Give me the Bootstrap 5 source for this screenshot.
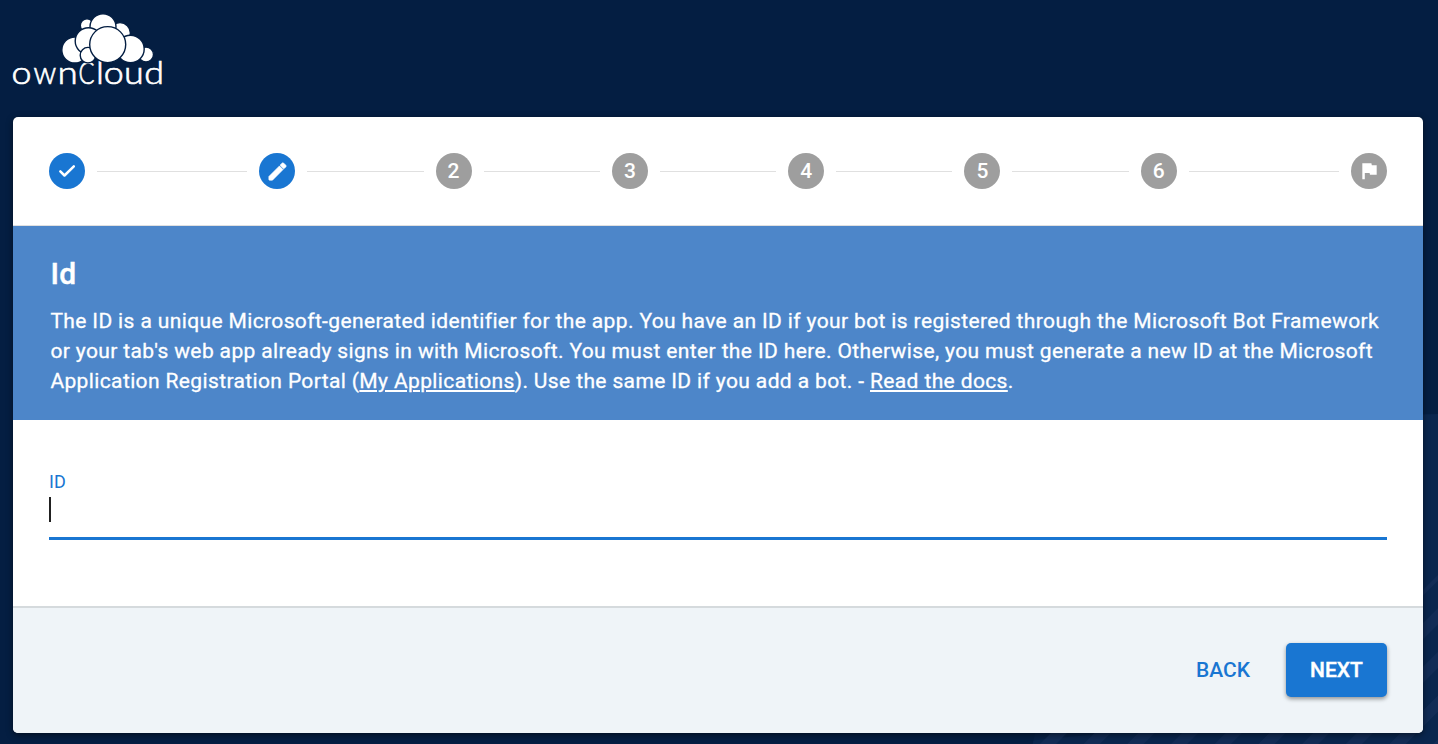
<!DOCTYPE html>
<html lang="en">
<head>
<meta charset="utf-8">
<meta name="viewport" content="width=device-width, initial-scale=1">
<title>ownCloud – Id</title>
<link href="https://cdn.jsdelivr.net/npm/bootstrap@5.3.0/dist/css/bootstrap.min.css" rel="stylesheet">
<style>
body{font-family:Roboto,"Liberation Sans",sans-serif;background:#041e42;height:744px;overflow:hidden;position:relative}
.backdrop{position:absolute;right:0;bottom:0;z-index:-1}
.brand-logo{height:117px;padding-left:5px}
.brand-logo text{font-family:Lato,sans-serif;font-weight:300;font-size:32px}
.wizard{margin:0 15px 0 13px;height:616px;border:0;border-radius:5px;overflow:hidden;box-shadow:0 2px 6px rgba(0,0,0,.5)}
.steps{height:109px;padding:0 36px;border-bottom:1px solid #e0e0e0}
.step-dot{width:36px;height:36px;flex:none;background:#9e9e9e;color:#fff;font-size:21px;font-weight:500;line-height:36px}
.step-dot.active{background:#1976d2}
.step-line{height:1px;background:#e0e0e0;margin:1px 12px 0;flex:1 1 0}
.step-line.wide{flex:0 0 150.3px}
.intro{height:194px;background:#4d86c9;padding:30px 37px 0 37.4px;color:#fff;font-weight:400;font-size:21px;line-height:30px;letter-spacing:.37px}
.intro h1{font-size:30px;line-height:36px;font-weight:500;margin:0 0 14px;letter-spacing:.3px;-webkit-text-stroke:.4px #fff}
.intro p{white-space:nowrap;-webkit-text-stroke:.3px #fff}
.intro a{color:#fff}
.fields{height:186px;padding:51px 36px 0}
.fields label{font-size:18px;line-height:22px;color:#1976d2;display:block}
.id-field{height:47px;border-bottom:3px solid #1976d2;padding-top:4px}
.caret{width:2px;height:25px;background:#212121}
.actions{background:#eff4f8;border-top:2px solid #d5dadd;padding:0 36px 2px}
.actions .btn{font-size:21px;font-weight:500;line-height:24px;height:54px;border:0;padding:0 24px}
.actions .btn-back{color:#1976d2;margin-right:12px}
.actions .btn-next{background:#1976d2;color:#fff;width:101px;border-radius:5px;box-shadow:0 2px 4px rgba(0,0,0,.4);-webkit-text-stroke:.4px #fff}
</style>
</head>
<body>
<svg class="backdrop" width="438" height="344" viewBox="1000 400 438 344" aria-hidden="true">
<defs><pattern id="bars" width="43.7" height="44" patternUnits="userSpaceOnUse" patternTransform="translate(1040 744) skewX(-45)"><path d="M0 0h16v44H0z" fill="#122c56"/></pattern></defs>
<circle cx="1438" cy="828" r="414" fill="#0a264e"/>
<path d="M1220 730H1150Q1080 735 1000 744H1000V690H1200z" fill="#041e42" opacity=".6"/>
<path d="M1038 744V730H1423V590L1438 575V744z" fill="url(#bars)"/>
</svg>
<header class="brand-logo">
<svg width="170" height="110" viewBox="5 0 170 110" fill="#fff" role="img" aria-label="ownCloud">
<g stroke="#fff" stroke-width=".7">
<text transform="translate(11.5 83.6) scale(1.12 1)">o</text>
<text transform="translate(33.5 83.6) scale(.93 1)">w</text>
<text transform="translate(57.5 83.6) scale(1.15 1)">n</text>
<text transform="translate(78.5 83.6) scale(.74 1)">C</text>
<text transform="translate(0 83.6) scale(1.12 1)" x="85.8 92.6 110.7 128.7">loud</text>
</g>
<g stroke="#041e42" stroke-width="1.4">
<circle cx="87" cy="25.5" r="6.7"/><circle cx="120" cy="33" r="10.4"/><circle cx="103" cy="26.7" r="13"/>
<circle cx="74.8" cy="50" r="13"/><circle cx="88.5" cy="41" r="13.3"/><circle cx="146" cy="54.5" r="7.5"/><circle cx="130.5" cy="49" r="13.7"/>
<circle cx="88" cy="55.2" r="7.8"/><circle cx="107.7" cy="44.6" r="18"/></g>
</svg>
</header>
<main class="card wizard">
<nav class="steps d-flex align-items-center">
<span class="step-dot active rounded-circle d-flex align-items-center justify-content-center"><svg width="20" height="20" viewBox="0 0 24 24" fill="none"><path d="M4 12.4 9 17.4 20.2 6.4" stroke="#fff" stroke-width="3" stroke-linecap="round" stroke-linejoin="round"/></svg></span>
<span class="step-line wide"></span>
<span class="step-dot active rounded-circle d-flex align-items-center justify-content-center"><svg width="23" height="23" viewBox="0 0 24 24" fill="#fff"><path d="M3 17.25V20.3q0 .7.7.7H6.750L17.81 9.94l-3.75-3.75zM20.71 7.3a1.5 1.5 0 0 0 0-1.8l-2.2-2.2a1.5 1.5 0 0 0-1.8 0l-1.98 2.05 3.75 3.75z" stroke="#fff" stroke-width=".7"/></svg></span>
<span class="step-line"></span><span class="step-dot rounded-circle text-center">2</span>
<span class="step-line"></span><span class="step-dot rounded-circle text-center">3</span>
<span class="step-line"></span><span class="step-dot rounded-circle text-center">4</span>
<span class="step-line"></span><span class="step-dot rounded-circle text-center">5</span>
<span class="step-line"></span><span class="step-dot rounded-circle text-center">6</span>
<span class="step-line wide"></span>
<span class="step-dot rounded-circle d-flex align-items-center justify-content-center"><svg width="23" height="23" viewBox="0 0 24 24" fill="#fff"><path d="M14.4 5.500 14 3.500H4.500V20h2.600V13.500h5l.4 2h7V5.500z"/></svg></span>
</nav>
<section class="intro">
<h1>Id</h1>
<p class="m-0">The ID is a unique Microsoft-generated identifier for the app. You have an ID if your bot is registered through the Microsoft Bot Framework<br>or your tab's web app already signs in with Microsoft. You must enter the ID here. Otherwise, you must generate a new ID at the Microsoft<br>Application Registration Portal (<a href="#">My Applications</a>). Use the same ID if you add a bot. - <a href="#">Read the docs</a>.</p>
</section>
<section class="fields"><label>ID</label><div class="id-field"><div class="caret"></div></div></section>
<footer class="actions flex-grow-1 d-flex align-items-center justify-content-end">
<button class="btn btn-back" type="button">BACK</button>
<button class="btn btn-next" type="button">NEXT</button>
</footer>
</main>
<script src="https://cdn.jsdelivr.net/npm/bootstrap@5.3.0/dist/js/bootstrap.bundle.min.js"></script>
</body>
</html>
